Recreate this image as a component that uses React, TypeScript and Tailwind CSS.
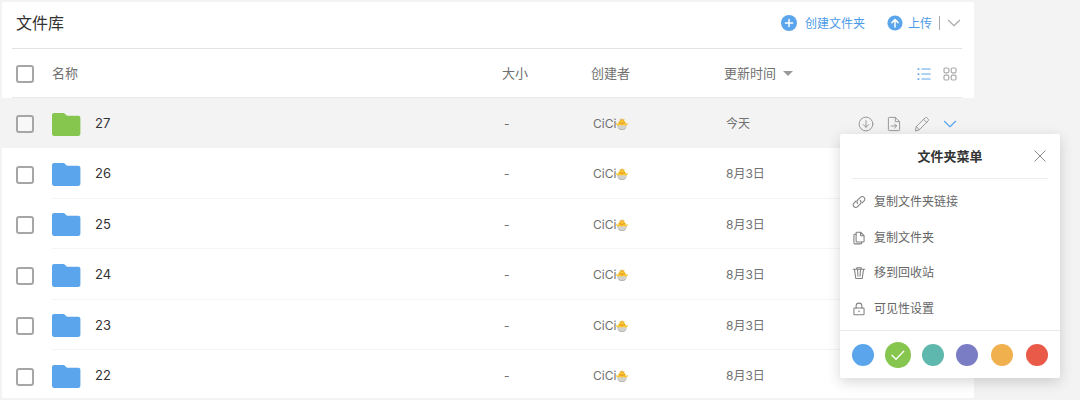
import type { ReactNode } from "react";

type IconProps = { className?: string; children?: ReactNode };

function Icon({ className = "size-4", children }: IconProps) {
  return (
    <svg
      viewBox="0 0 16 16"
      className={className}
      fill="none"
      stroke="currentColor"
      strokeWidth="1"
      strokeLinecap="round"
      strokeLinejoin="round"
      aria-hidden="true"
    >
      {children}
    </svg>
  );
}

const PlusCircle = () => (
  <Icon>
    <circle cx="8" cy="8" r="8" fill="currentColor" stroke="none" />
    <path d="M8 4.4v7.2M4.4 8h7.2" stroke="#fff" strokeWidth="1.5" />
  </Icon>
);

const UploadCircle = () => (
  <Icon>
    <circle cx="8" cy="8" r="7.6" fill="currentColor" stroke="none" />
    <path d="M8 12V4.8M4.9 7.6 8 4.5l3.1 3.1" stroke="#fff" strokeWidth="1.5" />
  </Icon>
);

const Chevron = () => (
  <Icon>
    <path d="M2.4 5.3 8 10.7l5.6-5.4" strokeWidth="1.2" />
  </Icon>
);

const ListIcon = () => (
  <Icon>
    <path d="M5.8 3h8.4M5.8 8h8.4M5.8 13h8.4" strokeWidth="1.1" />
    <g fill="currentColor" stroke="none">
      <rect x="1.6" y="2.2" width="1.7" height="1.7" />
      <rect x="1.6" y="7.2" width="1.7" height="1.7" />
      <rect x="1.6" y="12.2" width="1.7" height="1.7" />
    </g>
  </Icon>
);

const GridIcon = () => (
  <Icon>
    <rect x="2" y="2" width="4.8" height="4.8" rx="1.2" strokeWidth="1.2" />
    <rect x="9.2" y="2" width="4.8" height="4.8" rx="1.2" strokeWidth="1.2" />
    <rect x="2" y="9.2" width="4.8" height="4.8" rx="1.2" strokeWidth="1.2" />
    <rect x="9.2" y="9.2" width="4.8" height="4.8" rx="1.2" strokeWidth="1.2" />
  </Icon>
);

const DownloadIcon = () => (
  <Icon>
    <circle cx="8" cy="8" r="6.9" />
    <path d="M8 4.6v6.6M5.2 8.5 8 11.3l2.8-2.8" />
  </Icon>
);

const MoveIcon = () => (
  <Icon>
    <path d="M9.3 1.4H3.2a.8.8 0 0 0-.8.8v11.6c0 .5.3.8.8.8h9.6c.5 0 .8-.3.8-.8V5.7L9.3 1.4v4.3h4.3" />
    <path d="M5.2 10h5.4M8.6 8l2 2-2 2" />
  </Icon>
);

const PencilIcon = () => (
  <Icon>
    <path d="M1.400 14.600 2.300 10.600 10.900 2c.7-.7 1.600-.7 2.300 0l.8.8c.7.7.7 1.600 0 2.300L5.400 13.700ZM9.600 3.300l3.100 3.100M2.300 10.600l3.100 3.100" />
  </Icon>
);

const LinkIcon = () => (
  <Icon className="size-3.5">
    <path d="M6.6 9.8a3 3 0 0 1 0-4.2l3-3a2.9 2.9 0 0 1 4.2 0 2.9 2.9 0 0 1 0 4.2l-2.2 2.2" strokeWidth="1.2" />
    <path d="M9.4 6.2a3 3 0 0 1 0 4.2l-3 3a2.9 2.9 0 0 1-4.2 0 2.9 2.9 0 0 1 0-4.2L4.4 7" strokeWidth="1.2" />
  </Icon>
);

const CopyIcon = () => (
  <Icon className="size-3.5">
    <path d="M9.800 1.400H5.600a.9.9 0 0 0-.9.9v9.300c0 .5.4.9.9.9h7.300c.5 0 .9-.4.9-.9V5.400l-4-4v4h4" strokeWidth="1.2" />
    <path d="M4.700 3.800h-1.500a1 1 0 0 0-1 1v8.900c0 .6.4 1 1 1h6.800a1 1 0 0 0 1-1v-1.200" strokeWidth="1.2" />
  </Icon>
);

const TrashIcon = () => (
  <Icon className="size-3.5">
    <path d="M1.4 3.8h13.2M5.4 3.8V1.9h5.2v1.9M2.8 3.8l1.500 10.400h7.400l1.500-10.400M6.300 3.800l.5 8M9.700 3.800l-.5 8" strokeWidth="1.2" />
  </Icon>
);

const LockIcon = () => (
  <Icon className="size-3.5">
    <rect x="2.2" y="6.8" width="11.6" height="7.8" rx="1" strokeWidth="1.2" />
    <path d="M4.7 6.8V4.6a3.3 3.3 0 0 1 6.6 0v2.2" strokeWidth="1.2" />
    <circle cx="8" cy="10.7" r=".9" fill="currentColor" stroke="none" />
  </Icon>
);

const CloseIcon = () => (
  <Icon>
    <path d="m2.8 2.8 10.4 10.4M13.2 2.8 2.8 13.2" />
  </Icon>
);

const FolderIcon = ({ className }: { className: string }) => (
  <svg viewBox="0 0 29 23" className={`h-[23px] w-[29px] shrink-0 ${className}`} fill="currentColor" aria-hidden="true">
    <path d="M2.2 0h9.2c.6 0 1.1.3 1.5.7l1.5 1.6c.3.3.6.5 1 .5h10.800c1.300 0 2.200.9 2.200 2.200v15.600c0 1.400-.9 2.300-2.200 2.300H2.200C.9 22.900 0 22 0 20.600V2.200C0 .9.9 0 2.200 0Z" />
  </svg>
);

const ChickIcon = () => (
  <svg viewBox="0 0 24 24" className="size-3" aria-hidden="true">
    <path d="M8 6 7 2l3.500 1.500L12 0l1.800 3.500L17 2l-1 4Z" fill="#e0a52a" />
    <path d="M4 12.500C4 7.500 7.500 4.500 12 4.500s8 3 8 8l3-3.500c1.500 4-.5 6.500-4 7H5c-3.500-.5-5.500-3-4-7Z" fill="#fbc62f" />
    <path d="m2 13.500 3.400 2.200 3.200-2.200 3.400 2.200 3.400-2.200 3.200 2.200 3.400-2.200c.3 6-4 10.500-10 10.500S1.700 19.500 2 13.500Z" fill="#d3d3cd" />
    <path d="M4 19c2 2.500 5 3.500 8 3.500s6-1 8-3.500c-1.500 3.500-4.500 5-8 5s-6.500-1.500-8-5Z" fill="#aaaaa4" />
    <circle cx="8" cy="9.500" r="1" fill="#8a611c" />
    <circle cx="16" cy="9.500" r="1" fill="#8a611c" />
    <path d="m10 10.500 2-1.200 2 1.200-2 2.200Z" fill="#e8782c" />
  </svg>
);

const Checkbox = ({ label }: { label: string }) => (
  <input
    type="checkbox"
    aria-label={label}
    className="block size-[18px] appearance-none rounded-[3px] border-2 border-[#a6a6a6] bg-white/40 checked:bg-[#5ba5ec]"
  />
);

const rows = [
  { name: "27", date: "今天", active: true },
  { name: "26", date: "8月3日", active: false },
  { name: "25", date: "8月3日", active: false },
  { name: "24", date: "8月3日", active: false },
  { name: "23", date: "8月3日", active: false },
  { name: "22", date: "8月3日", active: false },
];

const menuItems = [
  { label: "复制文件夹链接", icon: <LinkIcon /> },
  { label: "复制文件夹", icon: <CopyIcon /> },
  { label: "移到回收站", icon: <TrashIcon /> },
  { label: "可见性设置", icon: <LockIcon /> },
];

const colors = [
  { name: "蓝色", fill: "bg-[#5ba5ec]" },
  { name: "绿色", fill: "bg-[#86c64f]", selected: true },
  { name: "青色", fill: "bg-[#5fb8ae]" },
  { name: "紫色", fill: "bg-[#7a7dc4]" },
  { name: "橙色", fill: "bg-[#f0b04e]" },
  { name: "红色", fill: "bg-[#ea5a49]" },
];

function FolderMenu() {
  return (
    <div
      role="dialog"
      aria-label="文件夹菜单"
      className="absolute top-[134px] right-5 w-[220px] rounded-xs bg-white shadow-[0_4px_14px_rgba(0,0,0,0.16)]"
    >
      <div className="mx-3 flex h-[45px] items-center border-b border-[#ececec]">
        <h2 className="flex-1 pt-0.5 pl-4 text-center text-[13px] font-bold text-[#333]">文件夹菜单</h2>
        <button type="button" aria-label="关闭" className="text-[#888]">
          <CloseIcon />
        </button>
      </div>
      <ul className="pt-1 pb-[5px]">
        {menuItems.map((item) => (
          <li key={item.label} className="odd:h-9 even:h-[35px]">
            <button type="button" className="flex h-full w-full items-center gap-2 px-3 pt-0.5 text-xs text-[#666]">
              <span className="text-[#808080]">{item.icon}</span>
              {item.label}
            </button>
          </li>
        ))}
      </ul>
      <div className="flex h-12 items-center justify-between border-t border-[#e8e8e8] px-3">
        {colors.map((color) =>
          color.selected ? (
            <button
              key={color.name}
              type="button"
              aria-label={color.name}
              aria-pressed="true"
              className={`-mx-0.5 flex size-[26px] items-center justify-center rounded-full text-white ${color.fill}`}
            >
              <Icon>
                <path d="m2 8.300 4 4 7.700-8" strokeWidth="1.300" />
              </Icon>
            </button>
          ) : (
            <button
              key={color.name}
              type="button"
              aria-label={color.name}
              aria-pressed="false"
              className={`size-[22px] rounded-full ${color.fill}`}
            />
          ),
        )}
      </div>
    </div>
  );
}

export default function App() {
  return (
    <div className="relative h-screen overflow-hidden bg-[#f3f3f3] py-0.5 pr-[106px] pl-0.5 font-['Inter','Noto_Sans_CJK_SC',sans-serif] text-xs text-[#707070]">
      <main className="h-full overflow-hidden bg-white">
        <header className="mr-3 ml-2.5 flex h-[47px] items-center border-b border-[#e3e3e3] pb-1 pl-1">
          <h1 className="flex-1 text-base text-[#333]">文件库</h1>
          <div className="flex items-center text-[#5ba5ec]">
            <button type="button" className="mr-[22px] flex items-center gap-2">
              <PlusCircle />
              <span className="pt-0.5 text-[#4b9be8]">创建文件夹</span>
            </button>
            <button type="button" className="flex items-center gap-[5px]">
              <UploadCircle />
              <span className="pt-0.5 text-[#4b9be8]">上传</span>
            </button>
            <span className="mr-[6px] ml-[7px] h-3.5 w-px bg-[#aaa]" />
            <button type="button" aria-label="更多上传方式" className="text-[#aaa]">
              <Chevron />
            </button>
          </div>
        </header>

        <table className="w-full table-fixed border-separate border-spacing-0 text-left">
          <colgroup>
            <col className="w-2.5" />
            <col className="w-10" />
            <col />
            <col className="w-[89px]" />
            <col className="w-[133px]" />
            <col className="w-[126px]" />
            <col className="w-28" />
            <col className="w-3" />
          </colgroup>
          <thead className="text-[13px] text-[#707070] [&_th]:p-0 [&_th]:pt-0.5 [&_th]:font-normal">
            <tr className="h-[49px] [&>*]:border-b [&>td]:border-transparent [&>th]:border-[#e8e8e8]">
              <td />
              <th className="pl-1!">
                <Checkbox label="全选" />
              </th>
              <th>名称</th>
              <th>大小</th>
              <th>创建者</th>
              <th>
                <button type="button" className="flex items-center gap-[7px]">
                  更新时间
                  <span className="border-x-5 border-t-5 border-x-transparent border-t-[#999]" />
                </button>
              </th>
              <th>
                <div className="flex justify-end gap-2.5 pr-1">
                  <button type="button" aria-label="列表视图" className="text-[#5ba5ec]">
                    <ListIcon />
                  </button>
                  <button type="button" aria-label="网格视图" className="text-[#aaa]">
                    <GridIcon />
                  </button>
                </div>
              </th>
              <td />
            </tr>
          </thead>
          <tbody>
            {rows.map((row) => (
              <tr
                key={row.name}
                className={
                  row.active
                    ? "bg-[#f3f3f3] odd:h-[50px] even:h-[51px] [&>td]:p-0 [&>td]:pt-0.5"
                    : "odd:h-[50px] even:h-[51px] [&>td]:p-0 [&>td]:pt-0.5 [&>td.line]:border-b [&>td.line]:border-[#f4f4f4]"
                }
              >
                <td />
                <td className="pl-1!">
                  <Checkbox label={`选择 ${row.name}`} />
                </td>
                <td className="line">
                  <a href="#" className="flex items-center gap-3.5 text-[13px] text-[#333]">
                    <FolderIcon className={row.active ? "text-[#86c64f]" : "text-[#5ba5ec]"} />
                    {row.name}
                  </a>
                </td>
                <td className="line pl-0.5!">-</td>
                <td className="line pl-0.5!">
                  <span className="flex items-center">
                    CiCi
                    <ChickIcon />
                  </span>
                </td>
                <td className="line pl-0.5!">{row.date}</td>
                <td className="line">
                  {row.active && (
                    <div className="flex justify-end gap-3 pr-1 text-[#999]">
                      <button type="button" aria-label="下载">
                        <DownloadIcon />
                      </button>
                      <button type="button" aria-label="移动">
                        <MoveIcon />
                      </button>
                      <button type="button" aria-label="编辑">
                        <PencilIcon />
                      </button>
                      <button type="button" aria-label="更多" aria-expanded="true" className="text-[#5ba5ec]">
                        <Chevron />
                      </button>
                    </div>
                  )}
                </td>
                <td />
              </tr>
            ))}
          </tbody>
        </table>
      </main>
      <FolderMenu />
    </div>
  );
}
